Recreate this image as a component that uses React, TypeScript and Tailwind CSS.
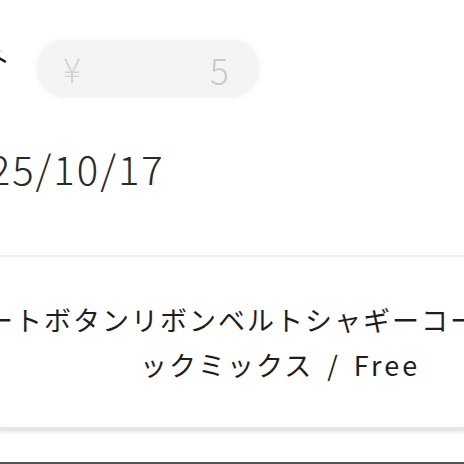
import React from 'react'

const jp = { fontFamily: '"Noto Sans CJK JP", "Noto Sans", sans-serif' }

export default function App(): React.ReactNode {
  return (
    <div className="w-[464px] h-[464px] bg-white overflow-hidden flex flex-col text-[#222]" style={jp}>
      {/* header row */}
      <div className="h-[138px] pt-[40px] flex items-start">
        <svg width="8" height="24" viewBox="0 0 8 24" className="mt-[10px] shrink-0">
          <path d="M-1 8 L5 11.5" stroke="#111" strokeWidth="2.4" strokeLinecap="round" fill="none" />
          <path d="M0 0 L3 3" stroke="#e4e4e4" strokeWidth="1.5" fill="none" />
        </svg>
        <div className="ml-[29px] w-[222px] h-[57px] rounded-full bg-[#f6f3f4] shadow-[0_0_6px_#f3eff0] flex items-center justify-between pl-[26px] pr-[30px]">
          <span className="text-[34px] leading-none text-[#d2d2d2] font-light blur-[0.6px]">¥</span>
          <span className="text-[36px] leading-none text-[#c9c9c9] font-light blur-[0.4px]">5</span>
        </div>
      </div>

      {/* date */}
      <div className="h-[117px] pt-[10px]">
        <div className="-ml-[58px] text-[40px] leading-[40px] tracking-[2px] whitespace-nowrap font-light text-[#2a2a2a]">2025/10/17</div>
      </div>

      <div className="h-[2px] bg-[#f1f1f1] shadow-[0_2px_3px_#f6f6f6]" />

      {/* product name */}
      <div className="h-[170px] pt-[40px] text-[27px] leading-[45px] tracking-[2px] whitespace-nowrap text-[#1e1e1e]">
        <div className="-ml-[14px]">ートボタンリボンベルトシャギーコート</div>
        <div className="ml-[140px] flex items-baseline">
          <span>ックミックス</span>
          <span className="ml-[14px] mr-[14px]">/</span>
          <span className="tracking-[3px]">Free</span>
        </div>
      </div>

      <div className="h-[4px] bg-[#e6e6e6] shadow-[0_2px_3px_#efefef]" />
      <div className="flex-1" />
      <div className="h-[2px] bg-[#555]" />
    </div>
  )
}
